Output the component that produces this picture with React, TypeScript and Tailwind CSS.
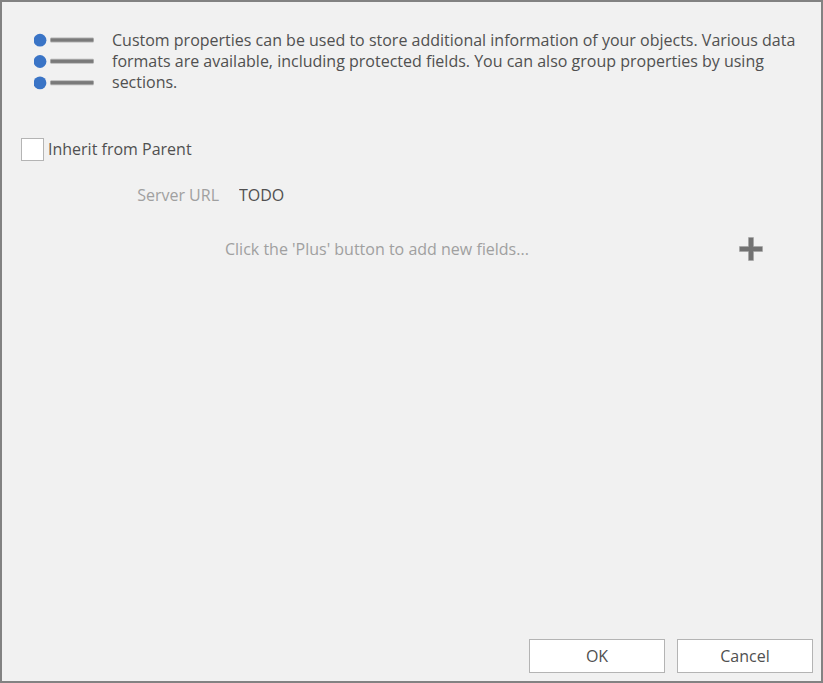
const rows = [10, 31.3, 52.7];

function PropertiesIcon() {
  return (
    <svg className="h-16 w-[62px] shrink-0" viewBox="0 0 62 64" aria-hidden="true">
      {rows.map((y) => (
        <g key={y}>
          <circle cx="6" cy={y + 0.2} r="6.4" fill="#3a74c6" />
          <rect x="16.5" y={y - 2.5} width="43" height="5" rx="0.5" fill="#b4b4b4" />
          <rect x="16.5" y={y - 1.6} width="43" height="3.2" fill="#7a7a7a" />
        </g>
      ))}
    </svg>
  );
}

export default function App() {
  return (
    <main className="flex min-h-screen flex-col border-2 border-[#828282] bg-[#f1f1f1] font-['Open_Sans','Noto_Sans',sans-serif] text-base leading-[21px] text-[#505050]">
      <header className="flex gap-4 pt-7 pr-4 pl-8">
        <PropertiesIcon />
        <p>
          Custom properties can be used to store additional information of your objects. Various data
          formats are available, including protected fields. You can also group properties by using
          sections.
        </p>
      </header>

      <form className="flex grow flex-col pt-11" onSubmit={(e) => e.preventDefault()}>
        <label className="flex items-center gap-1 self-start pl-[19px]">
          <input
            type="checkbox"
            className="size-[23px] appearance-none border border-[#b4b4b4] bg-white checked:bg-[#3a74c6]"
          />
          Inherit from Parent
        </label>

        <div className="mt-6 flex items-center gap-5">
          <label htmlFor="server-url" className="w-[217px] text-right text-[#a0a0a0]">
            Server URL
          </label>
          <input id="server-url" type="text" defaultValue="TODO" className="h-[21px] grow bg-transparent outline-none" />
        </div>

        <div className="mt-[26px] flex items-center justify-between pr-[53px] pl-[223px]">
          <p className="text-[#a0a0a0]">Click the 'Plus' button to add new fields...</p>
          <button type="button" aria-label="Add field" className="flex size-[34px] items-center justify-center">
            <svg className="size-6" viewBox="0 0 24 24" aria-hidden="true">
              <path d="M9.5 .5h5v9h9v5h-9v9h-5v-9h-9v-5h9z" fill="#727272" stroke="#a0a0a0" strokeWidth="0.5" />
            </svg>
          </button>
        </div>

        <footer className="mt-auto flex justify-end gap-3 pr-2 pb-2">
          <button type="submit" className="h-[34px] w-[136px] border border-[#b4b4b4] bg-white">
            OK
          </button>
          <button type="button" className="h-[34px] w-[136px] border border-[#b4b4b4] bg-white">
            Cancel
          </button>
        </footer>
      </form>
    </main>
  );
}
